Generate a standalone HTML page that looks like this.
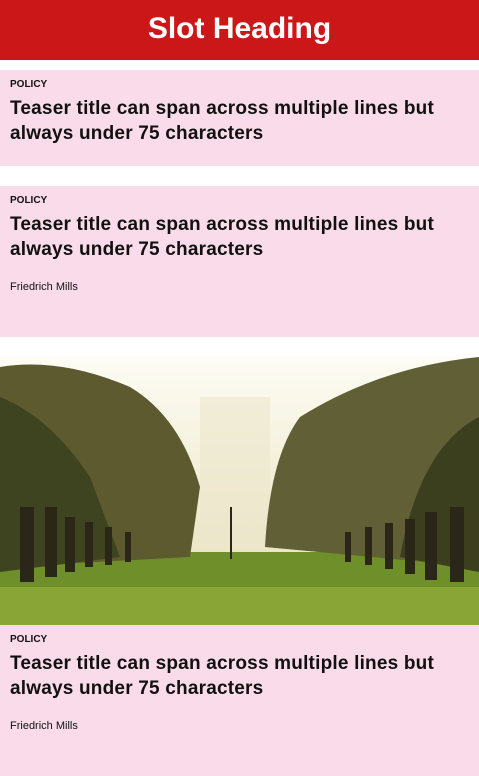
<!DOCTYPE html>
<html><head><style>
body{margin:0;width:479px;height:776px;overflow:hidden;background:#fff;font-family:"Liberation Sans",Arial,sans-serif;color:#111;}
.hd{height:60px;background:#cc1719;color:#fff;text-align:center;font-weight:bold;font-size:30px;line-height:58px;}
.card{background:#f9dbe9;padding:0 10px;position:absolute;left:0;width:459px;}
.tag{font-size:10px;font-weight:bold;position:absolute;left:10px;}
.t{font-size:19px;font-weight:bold;line-height:25px;position:absolute;left:10px;width:465px;letter-spacing:0.2px;}
.a{font-size:11px;position:absolute;left:10px;}
.img{position:absolute;left:0;top:357px;width:479px;height:268px;overflow:hidden;}
</style></head><body>
<div class="hd">Slot Heading</div>
<div class="card" style="top:70px;height:96px"></div>
<div class="tag" style="top:79px">POLICY</div>
<div class="t" style="top:96px">Teaser title can span across multiple lines but always under 75 characters</div>
<div class="card" style="top:186px;height:151px"></div>
<div class="tag" style="top:195px">POLICY</div>
<div class="t" style="top:212px">Teaser title can span across multiple lines but always under 75 characters</div>
<div class="a" style="top:281px">Friedrich Mills</div>
<div class="img">
<svg width="479" height="268" viewBox="0 0 479 268">
<defs><linearGradient id="g" x1="0" y1="0" x2="0" y2="1"><stop offset="0" stop-color="#fdfcf4"/><stop offset="1" stop-color="#ece6c6"/></linearGradient></defs>
<rect width="479" height="200" fill="url(#g)"/>
<rect x="200" y="40" width="70" height="150" fill="#ebe6cc" opacity="0.6"/>
<rect x="0" y="195" width="479" height="73" fill="#6f8f2a"/>
<rect x="0" y="230" width="479" height="38" fill="#88a535"/>
<path d="M0 10 Q60 0 130 30 Q180 60 200 130 L190 200 L0 210Z" fill="#5e5a30"/>
<path d="M0 40 Q50 60 90 120 L120 200 L0 215Z" fill="#3f4420"/>
<path d="M479 0 Q380 10 300 60 Q270 100 265 190 L479 210Z" fill="#605f35"/>
<path d="M479 60 Q420 90 400 200 L479 215Z" fill="#3c3f1e"/>
<g fill="#2a2618">
<rect x="20" y="150" width="14" height="75"/><rect x="45" y="150" width="12" height="70"/><rect x="65" y="160" width="10" height="55"/><rect x="85" y="165" width="8" height="45"/><rect x="105" y="170" width="7" height="38"/><rect x="125" y="175" width="6" height="30"/>
<rect x="450" y="150" width="14" height="75"/><rect x="425" y="155" width="12" height="68"/><rect x="405" y="162" width="10" height="55"/><rect x="385" y="166" width="8" height="46"/><rect x="365" y="170" width="7" height="38"/><rect x="345" y="175" width="6" height="30"/>
<rect x="230" y="150" width="2" height="52"/></g>
</svg>
</div>
<div class="card" style="top:625px;height:151px"></div>
<div class="tag" style="top:634px">POLICY</div>
<div class="t" style="top:651px">Teaser title can span across multiple lines but always under 75 characters</div>
<div class="a" style="top:720px">Friedrich Mills</div>
</body></html>
